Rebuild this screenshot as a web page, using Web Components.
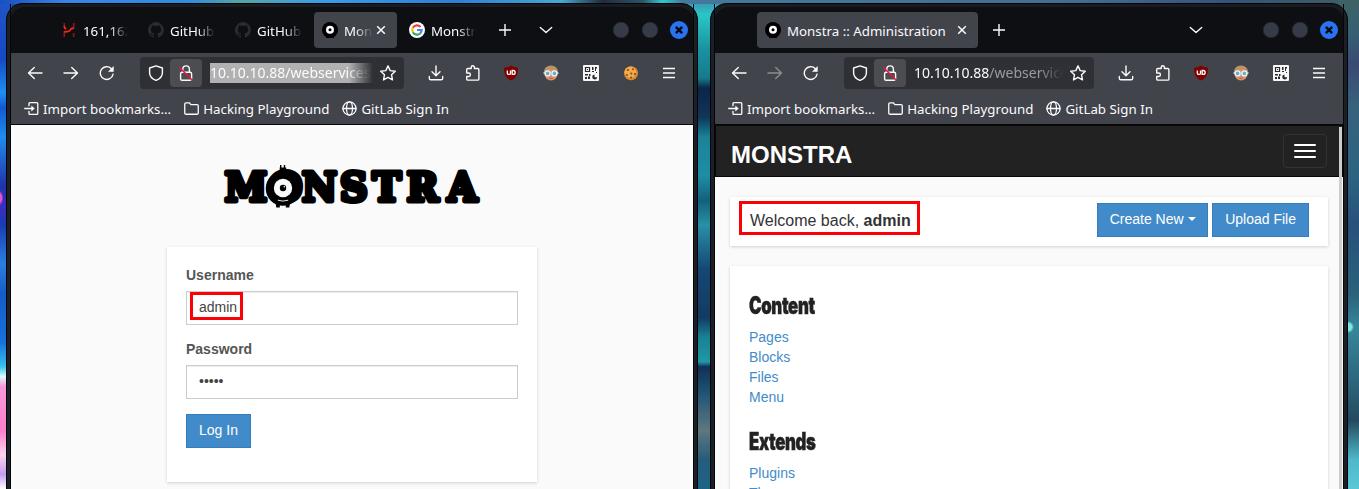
<!DOCTYPE html>
<html lang="en">
<head>
<meta charset="utf-8">
<title>Monstra</title>
<style>
html,body{margin:0;height:489px;overflow:hidden;background:#1e4f74}
</style>
</head>
<body>
<desk-top></desk-top>
<script>
const define = (name, html, setup) => {
  const t = document.createElement('template');
  t.innerHTML = html;
  customElements.define(name, class extends HTMLElement {
    constructor() { super(); this.attachShadow({mode: 'open'}).append(t.content.cloneNode(true)); }
    connectedCallback() { if (setup) setup(this, this.shadowRoot); }
  });
};

const line = 'fill="none" stroke="currentColor" stroke-width="1.4" stroke-linecap="round" stroke-linejoin="round"';
const ICONS = {
  back: `<g ${line}><path d="M15 8H1.5M7.3 2.6 1.5 8l5.8 5.4"/></g>`,
  forward: `<g ${line}><path d="M1 8h13.5M8.700 2.600 14.500 8l-5.800 5.400"/></g>`,
  reload: `<g ${line}><path d="M14 9.300A6.400 6.400 0 1 1 12.400 3.700"/></g><path d="M14.700 1v5.700H9z" fill="currentColor"/>`,
  shield: `<g ${line}><path d="M8 .8 14.400 3v4.800c0 3.500-2.600 6.200-6.400 7.600C4.200 14 1.600 11.300 1.600 7.800V3z"/></g>`,
  lock: `<g ${line}><rect x="2.600" y="7.200" width="11" height="8" rx="1.500"/><path d="M4.800 7V4.200a3.300 3.300 0 0 1 6.600 0V7"/></g><path d="M1.200 2.200 14.500 15.500" stroke="#f0123f" stroke-width="1.600"/>`,
  star: `<g ${line}><path d="m8 .9 2.200 4.700 5.100.6-3.800 3.500 1 5.200L8 12.400l-4.500 2.500 1-5.200L.7 6.200l5.100-.6z"/></g>`,
  download: `<g ${line}><path d="M8 .9v9.600M4 6.700l4 4 4-4M1.300 11.500v1.700c0 1 .6 1.600 1.600 1.600h10.200c1 0 1.600-.6 1.600-1.600v-1.700"/></g>`,
  puzzle: `<g ${line}><path d="M1.700 5.500V4.700c0-.7.500-1.200 1.200-1.200h3.300V2.400a1.600 1.600 0 0 1 3.200 0v1.100h3.300c.7 0 1.200.5 1.200 1.200v9.200c0 .7-.5 1.200-1.200 1.200H2.900c-.7 0-1.200-.5-1.200-1.200v-2.400h2a1.700 1.700 0 0 0 0-3.500h-2z"/></g>`,
  ublock: `<path d="M8 .6C10.300 2.200 12.600 2.600 15 2.700c0 6-.8 9.600-7 12.900C1.800 12.300 1 8.700 1 2.700 3.400 2.600 5.700 2.200 8 .6z" fill="#800000"/><path d="M4.300 5.600v2.600q0 1.200 1.600 1.200T7.500 8.200V5.600M9.200 5.500h1a1.800 1.800 0 0 1 0 3.900h-1z" fill="none" stroke="#fff" stroke-width="1.300"/>`,
  face: `<ellipse cx="8" cy="8.300" rx="6.600" ry="7.300" fill="#d9906d"/><path d="M1 8C.6 3.500 4 .6 8 .6S15.400 3.500 15 8l-1.500-3-5.500-.8L2.500 5z" fill="#b89468"/><circle cx="4.600" cy="8.400" r="2.500" fill="#6daec3" stroke="#e9f7fb" stroke-width="1.300"/><circle cx="11.400" cy="8.400" r="2.500" fill="#6daec3" stroke="#e9f7fb" stroke-width="1.300"/><path d="M.3 8h2m11.400 0h2" stroke="#e9f7fb"/><path d="M6.300 13.300h3.400" stroke="#b5604b"/>`,
  qr: `<rect width="16" height="16" rx="1" fill="#f7f7f7"/><path d="M2.500 2.500h4v4h-4z" fill="none" stroke="#26282b" stroke-width="1.200"/><path d="M4 4h1v1H4zM9 2h1.500v3H9zm3 0h2v1.500h-1V6h-1zm-3 4h2v1H9zm4 1h1v1h-1zM2 9h3v1.500H2zm4 0h1.500v2H6zm-4 3h2v2H2zm3-.500h2V14H5z" fill="#26282b"/><path d="M11.500 9.500a2.500 2.500 0 1 0 2.700 2.700h-2.700z" fill="#26282b"/>`,
  cookie: `<circle cx="8" cy="8.200" r="7" fill="#d98a2f"/><circle cx="7.400" cy="7.200" r="5.700" fill="#f0ab4c"/><g fill="#8a4a1a"><circle cx="5" cy="5" r="1.100"/><circle cx="10" cy="4.200" r="1"/><circle cx="8.300" cy="8.500" r="1.100"/><circle cx="4" cy="10" r="1"/><circle cx="12" cy="9" r="1.100"/><circle cx="8" cy="12.600" r="1"/></g>`,
  menu: `<path d="M2 3.500h12M2 8h12M2 12.500h12" stroke="currentColor" stroke-width="1.400"/>`,
  import: `<g ${line}><path d="M5.300 5V2.800c0-.6.400-1 1-1h7.400c.6 0 1 .4 1 1v10.400c0 .6-.4 1-1 1H6.300c-.6 0-1-.4-1-1V11M.8 8h8"/></g><path d="m7.800 4.700 3.600 3.300-3.600 3.300z" fill="currentColor"/>`,
  folder: `<g ${line}><path d="M.8 12.800V3.200c0-.8.500-1.300 1.300-1.300h3.600l1.600 1.900h6.500c.8 0 1.400.5 1.400 1.300v7.700c0 .8-.6 1.300-1.400 1.300H2.100c-.8 0-1.300-.5-1.300-1.300z"/></g>`,
  globe: `<g ${line}><circle cx="8" cy="8" r="7"/><ellipse cx="8" cy="8" rx="3.200" ry="7"/><path d="M1 8h14"/></g>`,
  plus: `<path d="M8 2v12M2 8h12" stroke="currentColor" stroke-width="1.400"/>`,
  chevron: `<g ${line}><path d="m2.300 5.500 5.700 5 5.700-5"/></g>`,
  close: `<path d="m4.200 4.200 7.600 7.600m0-7.600-7.600 7.600" stroke="currentColor" stroke-width="1.500"/>`,
  dot: `<circle cx="8" cy="8" r="7.800" fill="#363b47" stroke="#262a33" stroke-width=".8"/>`,
  exit: `<circle cx="8" cy="8" r="8" fill="#2873f1"/><path d="m5.200 5.200 5.600 5.600m0-5.600-5.600 5.600" stroke="#080b12" stroke-width="2.200"/>`,
  hack: `<g fill="none" stroke-width="1.700"><path d="M3.300 1v3M3.300 9v6M12.700 1v6M12.700 11v4" stroke="#8d1711"/><path d="M3.300 4q0 2.500 2 2.900M3.300 9.900q6-.4 6-1.900t3.400-1.900" stroke="#f02c18"/></g>`,
  github: `<path fill="#282d33" d="M8 0a8 8 0 0 0-2.500 15.600c.4.100.5-.2.500-.4v-1.400c-2.200.5-2.700-1-2.700-1-.4-.9-.9-1.200-.9-1.200-.7-.5.100-.5.100-.5.800.1 1.200.8 1.200.8.700 1.200 1.900.9 2.300.7.100-.5.300-.9.500-1.100-1.800-.2-3.600-.9-3.600-4 0-.9.300-1.600.8-2.100-.1-.2-.4-1 .1-2.100 0 0 .7-.2 2.200.8a7.500 7.500 0 0 1 4 0c1.500-1 2.200-.8 2.200-.8.400 1.100.2 1.900.1 2.100.5.600.8 1.300.8 2.100 0 3.100-1.900 3.700-3.700 3.900.3.300.6.800.6 1.500v2.200c0 .2.100.5.600.4A8 8 0 0 0 8 0z"/>`,
  monstra: `<circle cx="8" cy="8" r="8" fill="#000"/><path d="M4 13h3v3H4zM9 13h3v3H9z" fill="#000"/><circle cx="8" cy="7.700" r="4" fill="#fff"/><circle cx="8" cy="7.700" r="1.500" fill="#000"/>`,
  google: `<circle cx="8" cy="8" r="8" fill="#fff"/><g fill="none" stroke-width="2.200"><path d="M11.500 4.900A4.700 4.700 0 0 0 3.900 5.700" stroke="#ea4335"/><path d="M3.900 5.700a4.700 4.700 0 0 0 0 4.600" stroke="#fbbc05"/><path d="M3.900 10.300a4.700 4.700 0 0 0 7.200 1.200" stroke="#34a853"/><path d="M11.100 11.500A4.600 4.600 0 0 0 12.600 8H8" stroke="#4285f4"/></g>`
};

define('x-icon', `<style>:host{display:block;flex:none;width:16px;height:16px}svg{display:block;width:100%;height:100%}</style><svg viewBox="0 0 16 16"></svg>`,
  (el, root) => { root.querySelector('svg').innerHTML = ICONS[el.getAttribute('name')]; });

define('browser-tab', `<style>
:host{display:flex;align-items:center;box-sizing:border-box;height:36px;width:83px;padding:0 8px;border-radius:4px;color:#fbfbfe}
:host([active]){background:#42444c}
.t{flex:1;min-width:0;margin-left:6px;overflow:hidden;white-space:nowrap;line-height:20px;padding-top:2px;-webkit-mask-image:linear-gradient(90deg,#000 calc(100% - 18px),transparent)}
:host([full]) .t{-webkit-mask-image:none}
x-icon.x{display:none;margin-right:0}
:host([active]) .x{display:block}
</style><x-icon id="i"></x-icon><div class="t"><slot></slot></div><x-icon class="x" name="close"></x-icon>`,
  (el, root) => { const i = root.getElementById('i'); const n = document.createElement('x-icon'); n.setAttribute('name', el.getAttribute('icon')); i.replaceWith(n); });

define('tab-strip', `<style>
:host{display:flex;align-items:center;height:49px;padding:3px 5px 0 42px;box-sizing:border-box;gap:4px;color:#fbfbfe}
.sp{flex:1}
.tools{display:flex;align-items:center}
.wc{display:flex;align-items:center;gap:13px}
.wc x-icon.e{width:18px;height:18px;margin-left:-1px}
</style><slot></slot><div class="tools"><slot name="tools"></slot></div><span class="sp"></span><slot name="list"></slot><div class="wc"><x-icon name="dot"></x-icon><x-icon name="dot"></x-icon><x-icon class="e" name="exit"></x-icon></div>`);

define('url-bar', `<style>
:host{display:flex;align-items:center;box-sizing:border-box;height:32px;background:#2e3035;border-radius:4px;padding:0 8px;color:#fbfbfe}
.lock{display:flex;align-items:center;justify-content:center;width:32px;height:28px;border-radius:4px;background:#4b4d51;margin:0 8px 0 6px}
.u{flex:1;min-width:0;overflow:hidden;white-space:nowrap;font-size:14px;line-height:20px;-webkit-mask-image:linear-gradient(90deg,#000 calc(100% - 24px),transparent)}
.s{margin-left:7px}
:host([selected]) .u{background:#b1b1b1}
</style><x-icon name="shield"></x-icon><div class="lock"><x-icon name="lock"></x-icon></div><div class="u"><slot></slot></div><x-icon class="s" name="star"></x-icon>`);

define('nav-bar', `<style>
:host{display:flex;align-items:center;height:40px;padding-left:16px;color:#fbfbfe}
.n{display:flex;gap:20px;margin-right:25px}
</style><div class="n"><slot name="nav"></slot></div><slot></slot>`);

define('bookmark-bar', `<style>
:host{display:flex;align-items:center;height:31px;padding-left:12.5px;gap:12.5px;color:#fbfbfe;white-space:nowrap;letter-spacing:.02px}
div{display:flex;align-items:center;gap:4.5px;line-height:20px}
x-icon{width:15px;height:15px}
</style><div><x-icon name="import"></x-icon>Import bookmarks...</div><div><x-icon name="folder"></x-icon>Hacking Playground</div><div><x-icon name="globe"></x-icon>GitLab Sign In</div>`);

define('browser-window', `<style>
:host{display:block;box-sizing:border-box;height:510px;border-radius:17px 17px 0 0;border:1px solid #030406;background:#1b1f26;padding:0 3px;
 font:13.3px "Noto Sans",sans-serif}
.in{border:solid #050608;border-width:0 1px;}
.top{background:#0e0f13;height:49px;border-radius:14px 14px 0 0;box-shadow:inset 0 3px #191b21}
.bars{background:#42444c;border-bottom:1px solid #050608;height:71px}
</style><div class="in"><div class="top"><slot name="tabs"></slot></div><div class="bars"><slot name="nav"></slot><bookmark-bar></bookmark-bar></div><slot></slot></div>`);

define('btn-primary', `<style>:host{display:inline-flex;align-items:center;justify-content:center;box-sizing:border-box;height:34px;padding:0 12px;background:#428bca;border:1px solid #357ebd;color:#fff;font:14px/20px "Liberation Sans",Arial,sans-serif;white-space:nowrap;padding-bottom:2px}</style><slot></slot>`);

define('form-field', `<style>
:host{display:block;margin-bottom:15px;font:14px/20px "Liberation Sans",Arial,sans-serif}
label{display:block;font-weight:700;color:#555;margin-bottom:5px;height:20px;line-height:18px}
.c{position:relative;box-sizing:border-box;height:34px;border:1px solid #ccc;background:#fff;box-shadow:inset 0 1px 1px rgba(0,0,0,.075);padding:5px 12px;color:#444}
::slotted(i){position:absolute;left:3.400px;top:.4px;width:53px;height:28px;box-sizing:border-box;border:3px solid #fb0007}
</style><label></label><div class="c"><slot></slot></div>`,
  (el, root) => { root.querySelector('label').textContent = el.getAttribute('label'); });

define('monstra-logo', `<style>:host{display:block;width:258px;height:46px}svg{display:block;overflow:visible}text{font:bold 39px "DejaVu Serif",serif}</style>
<svg width="258" height="46" viewBox="0 0 258 46"><g transform="scale(.98 1)"><text y="38.500" x="1.800 47 80.500 119.300 152.500 187.500 229" stroke="#000" stroke-width="4.900" stroke-linejoin="round">MONSTRA</text></g>
<g transform="translate(.3 -1)"><path d="M57.700 3v4M61.500 3v4" stroke="#000" stroke-width="1.400" transform="translate(-.3)"/><path d="M56.400 5.500h6.500v2.300l-2 2.200v3h-2.500v-3l-2-2.200z"/>
<circle cx="59.700" cy="26.500" r="17.300"/><path d="M52 39h4.500v6.500H53zM62.500 39H67l-1 6.500h-3.500z"/>
<circle cx="59.700" cy="26" r="9.200" fill="#fafafa"/><circle cx="59.700" cy="26" r="3.200"/><circle cx="61" cy="24.800" r=".8" fill="#fff"/>
<path d="M54.500 38.200q5.200 1.800 10.400 0" fill="none" stroke="#fafafa" stroke-width=".9"/></g></svg>`);

define('login-page', `<style>
:host{display:flex;flex-direction:column;align-items:center;background:#fafafa;height:370px;padding-top:38px;box-sizing:border-box}
.card{width:370px;box-sizing:border-box;padding:19px 19px;height:235px;background:#fff;box-shadow:0 1px 3px rgba(0,0,0,.17);margin-top:38px}
</style><monstra-logo></monstra-logo><div class="card">
<form-field label="Username">admin<i></i></form-field>
<form-field label="Password">•••••</form-field>
<btn-primary>Log In</btn-primary></div>`);

define('menu-section', `<style>
:host{display:block;margin-bottom:22px}
h3{margin:0 0 8px;height:26px;font:900 24px/25px Inter,"Liberation Sans",sans-serif;color:#222;width:max-content;transform:scaleX(.7);transform-origin:0 0;letter-spacing:-.5px;-webkit-text-stroke:.4px #222}
::slotted(a){display:block;height:20px;line-height:20px;color:#428bca}
</style><h3></h3><slot></slot>`,
  (el, root) => { root.querySelector('h3').textContent = el.getAttribute('heading'); });

define('admin-page', `<style>
:host{display:block;position:relative;background:#fafafa;height:370px;overflow:hidden;font:14px/20px "Liberation Sans",Arial,sans-serif}
header{display:flex;align-items:center;justify-content:space-between;box-sizing:border-box;height:52px;background:#222;border:1px solid #080808;border-top-color:#0a0a0a;padding:0 15px;color:#fff}
.b{font:700 24px/30px "Liberation Sans",Arial,sans-serif;padding-top:8px}
.tg{box-sizing:border-box;width:44px;height:34px;border:1px solid #333;border-radius:4px;display:flex;flex-direction:column;gap:4px;align-items:center;justify-content:center}
.tg span{width:22px;height:2px;background:#fff;border-radius:1px}
main{padding:20px 15px}
.card{background:#fff;box-shadow:0 1px 3px rgba(0,0,0,.17);box-sizing:border-box}
.w{position:relative;display:flex;align-items:center;height:49px;padding:0 19px 3px 20px;gap:4px;margin-bottom:20px}
.w p{flex:1;margin:0;padding-top:2px;font-size:16px;color:#333}
.w i{position:absolute;left:9.400px;top:3.500px;width:181px;height:34.500px;box-sizing:border-box;border:3px solid #fb0007}
.cn{width:111px;padding:0 11px 2px}
.caret{border:4px solid transparent;border-top-color:#fff;border-bottom:0;margin-left:4px}
.m{padding:27px 19px;height:300px}
.sb{position:absolute;right:1px;top:2px;width:3px;bottom:0;background:#cdcdcd}
</style><header><div class="b">MONSTRA</div><div class="tg"><span></span><span></span><span></span></div></header>
<main><div class="card w"><p>Welcome back, <b>admin</b></p><btn-primary class="cn">Create New<span class="caret"></span></btn-primary><btn-primary>Upload File</btn-primary><i></i></div>
<div class="card m"><menu-section heading="Content"><a>Pages</a><a>Blocks</a><a>Files</a><a>Menu</a></menu-section>
<menu-section heading="Extends"><a>Plugins</a><a>Themes</a></menu-section></div></main><div class="sb"></div>`);

define('desk-top', `<style>
:host{display:flex;align-items:flex-start;width:1359px;height:489px;overflow:hidden;box-sizing:border-box;padding:3px 0 0 6px;gap:12px;
background:
 radial-gradient(circle 6px at 1348px 327px,#7fe8dc 60%,transparent),
 radial-gradient(ellipse 8px 18px at 0 198px,#f04fd0 20%,transparent 40%) 0 0/8px 489px no-repeat,
 linear-gradient(90deg,#1a4fc0,#3787e6 5%,#2f8be0 14%,#55a5a5 18%,#3b9de8 24%,#2c7fd8 34%,#46a9ce 42%,#202c3e 45%,#2c5266 48%,#30c8d0 49.500%,#43799c 51%,#436e94 80%,#365278 92%,#3d5c66) 0 0/1338px 4px no-repeat,
 linear-gradient(180deg,#1f55c8,#1648c4 12%,#1d90f0 19%,#1259d2 22%,#1f8df0 28%,#2034a8 38%,#3a2ec0 42%,#1a3cb4 46%,#2b7fe0 54%,#155bc8 60%,#1771dc 70%,#36c4ee 75%,#dff 77%,#f79ad8 79%,#ff7fcb 88%,#fbd5ee 93%,#c79af0 97%,#fff) 0 0/12px 489px no-repeat,
 linear-gradient(180deg,#3f8fb0,#2ac6c8 3%,#1a93a0 10%,#167a8c 16%,#0c2448 18%,#10365a 24%,#1a8298 28%,#1e8ea4 36%,#12617e 41%,#2a8fa6 46%,#144874 55%,#133a62 65%,#1a8296 69%,#1f98a6 74%,#132f56 75%,#1c5272 80%,#5f7780 88%,#265c7c 94%,#1d6486) 688px 0/34px 489px no-repeat,
 linear-gradient(180deg,#3e6264,#365f74 7%,#3b4a72 13%,#37627c 22%,#2c6480 36%,#28507c 46%,#29627a 60%,#38869a 67%,#2c667c 78%,#244a60 86%,#4eb8ca 94%,#5ac8d6) 1338px 0/21px 489px no-repeat}
browser-window{flex:none}
.l{width:692px}.r{width:638px}
.l url-bar{width:264px}.r url-bar{width:250px}
.d{color:#9a9ba1}
.dim{opacity:.4}
</style>
<browser-window class="l">
 <tab-strip slot="tabs">
  <browser-tab icon="hack">161,162</browser-tab><browser-tab icon="github">GitHub</browser-tab><browser-tab icon="github">GitHub</browser-tab><browser-tab icon="monstra" active>Monstra</browser-tab><browser-tab icon="google">Monstra</browser-tab>
  <x-icon slot="tools" name="plus" style="margin-left:9px"></x-icon><x-icon slot="tools" name="chevron" style="margin-left:25px"></x-icon>
 </tab-strip>
 <nav-bar slot="nav"><x-icon slot="nav" name="back"></x-icon><x-icon slot="nav" name="forward"></x-icon><x-icon slot="nav" name="reload"></x-icon>
  <url-bar selected>10.10.10.88/webservices</url-bar>
  <x-icon name="download" style="margin-left:24px"></x-icon><x-icon name="puzzle" style="margin-left:21px"></x-icon><x-icon name="ublock" style="margin-left:22px"></x-icon><x-icon name="face" style="margin-left:24px"></x-icon><x-icon name="qr" style="margin-left:24px"></x-icon><x-icon name="cookie" style="margin-left:24px"></x-icon><x-icon name="menu" style="margin-left:22px"></x-icon>
 </nav-bar>
 <login-page></login-page>
</browser-window>
<browser-window class="r">
 <tab-strip slot="tabs">
  <browser-tab icon="monstra" active full style="width:221px">Monstra :: Administration</browser-tab>
  <x-icon slot="tools" name="plus" style="margin-left:9px"></x-icon><x-icon slot="list" name="chevron" style="margin-right:55px"></x-icon>
 </tab-strip>
 <nav-bar slot="nav"><x-icon slot="nav" name="back"></x-icon><x-icon slot="nav" name="forward" class="dim"></x-icon><x-icon slot="nav" name="reload"></x-icon>
  <url-bar>10.10.10.88<span class="d">/webservices</span></url-bar>
  <x-icon name="download" style="margin-left:24px"></x-icon><x-icon name="puzzle" style="margin-left:21px"></x-icon><x-icon name="ublock" style="margin-left:22px"></x-icon><x-icon name="face" style="margin-left:24px"></x-icon><x-icon name="qr" style="margin-left:24px"></x-icon><x-icon name="menu" style="margin-left:22px"></x-icon>
 </nav-bar>
 <admin-page></admin-page>
</browser-window>`);
</script>
</body>
</html>
